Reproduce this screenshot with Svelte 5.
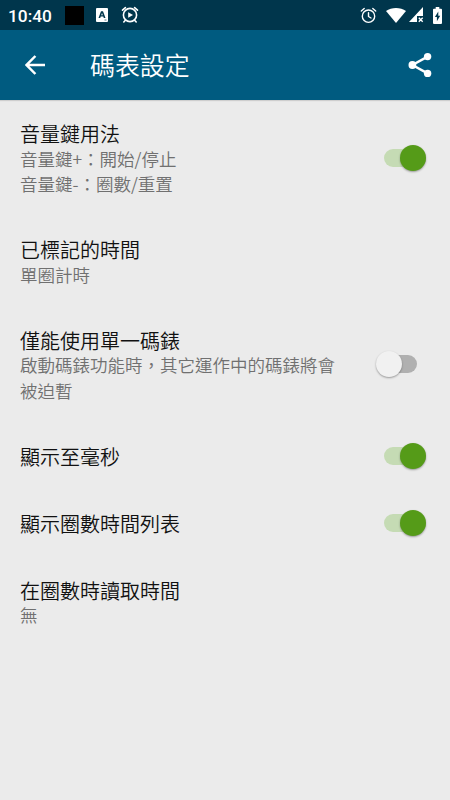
<script>
  let rows = $state([
    { title: '音量鍵用法', lines: ['音量鍵+：開始/停止', '音量鍵-：圈數/重置'], on: true },
    { title: '已標記的時間', lines: ['單圈計時'] },
    { title: '僅能使用單一碼錶', lines: ['啟動碼錶功能時，其它運作中的碼錶將會', '被迫暫'], on: false },
    { title: '顯示至毫秒', lines: [], on: true },
    { title: '顯示圈數時間列表', lines: [], on: true },
    { title: '在圈數時讀取時間', lines: ['無'] }
  ]);
</script>

<div class="screen">
  <div class="status">
    <span class="clock">10:40</span>
    <span class="square"></span>
    <svg class="letter" width="12" height="14" viewBox="0 0 12 14">
      <path fill="#fff" fill-rule="evenodd" d="M1 0h10a1 1 0 0 1 1 1v12a1 1 0 0 1-1 1H1a1 1 0 0 1-1-1V1a1 1 0 0 1 1-1zM5 3.2 2.5 10h1.7l.5-1.4h2.6l.5 1.4h1.7L7 3.2zM6 5l.8 2.3H5.2z" />
      <path d="M8.5 12h2" stroke="#5c7e8d" />
    </svg>
    <svg class="play-alarm" width="18" height="18" viewBox="0 0 18 18" fill="none" stroke="#fff" stroke-width="1.6" stroke-linecap="round">
      <circle cx="9" cy="9" r="6.6" />
      <path d="M1.5 4.2 4.4 1.6M16.5 4.2l-2.9-2.6M4.4 14.2 2.8 16M13.6 14.2l1.6 1.8" />
      <path d="M7.2 6.2v5.6L12 9z" fill="#fff" stroke="none" />
    </svg>
    <span class="grow"></span>
    <svg class="alarm" width="17" height="17" viewBox="0 0 17 17" fill="none" stroke="#fff" stroke-width="1.4" stroke-linecap="round" stroke-linejoin="round">
      <circle cx="8.5" cy="9.2" r="6.2" />
      <path d="M1.3 4 4.2 1.5M15.7 4l-2.9-2.5M8.5 5.7v3.8l2.5 1.5" />
    </svg>
    <svg class="wifi" width="20" height="15" viewBox="0 0 20 15">
      <path fill="#fff" d="M0 3.1C5.5-1 14.5-1 20 3.1L10 15z" />
    </svg>
    <svg class="signal" width="15" height="16" viewBox="0 0 15 16">
      <path fill="#fff" d="M14 0v9H8v6H0z" />
      <path d="m9.8 10.8 3.9 3.9m0-3.9-3.9 3.9" stroke="#fff" stroke-width="1.4" />
    </svg>
    <svg class="battery" width="9" height="17" viewBox="0 0 9 16" preserveAspectRatio="none">
      <path fill="#fff" fill-rule="evenodd" d="M2.7 0h3.6v1.6H8a1 1 0 0 1 1 1V15a1 1 0 0 1-1 1H1a1 1 0 0 1-1-1V2.6a1 1 0 0 1 1-1h1.7zM5.3 4.3 1.9 9.4h2v4L7.2 8.2H5.3z" />
    </svg>
  </div>

  <header>
    <svg class="back" width="20" height="20" viewBox="0 0 20 20" fill="none" stroke="#fff" stroke-width="2.5">
      <path d="M20 10H2M10.4 1 1.6 10l8.8 9" />
    </svg>
    <h1>碼表設定</h1>
    <svg class="share" width="24" height="26" viewBox="0 0 24 26" fill="#fff">
      <path d="M19.6 4.6 4.4 13l15.2 8.4" fill="none" stroke="#fff" stroke-width="2.4" />
      <circle cx="19.6" cy="4.6" r="3.7" />
      <circle cx="4.4" cy="13" r="3.9" />
      <circle cx="19.6" cy="21.4" r="3.7" />
    </svg>
  </header>

  <main>
    {#each rows as row}
      <section class:single={!row.lines.length}>
        <div class="text">
          <h2>{row.title}</h2>
          {#each row.lines as line}
            <p>{line}</p>
          {/each}
        </div>
        {#if row.on !== undefined}
          <button
            class="switch"
            class:on={row.on}
            role="switch"
            aria-checked={row.on}
            aria-label={row.title}
            onclick={() => (row.on = !row.on)}
          ><span class="thumb"></span></button>
        {/if}
      </section>
    {/each}
  </main>
</div>

<style>
  :global(body) {
    margin: 0;
    background: #ebebeb;
  }
  .screen {
    width: 450px;
    height: 800px;
    overflow: hidden;
    background: #ebebeb;
    font-family: Roboto, 'Noto Sans CJK TC', sans-serif;
    display: flex;
    flex-direction: column;
  }
  .status {
    height: 30px;
    flex: none;
    box-sizing: border-box;
    padding: 0 8px;
    background: #00364c;
    display: flex;
    align-items: center;
  }
  .clock {
    width: 57px;
    color: #fff;
    font-size: 17.3px;
    font-weight: 500;
    line-height: 30px;
    padding-top: 1px;
  }
  .square {
    width: 19px;
    height: 19px;
    background: #000;
  }
  .letter {
    margin-left: 12px;
  }
  .play-alarm {
    margin-left: 13px;
  }
  .grow {
    flex: 1;
  }
  .wifi {
    margin-left: 9px;
  }
  .signal {
    margin-left: 3px;
  }
  .battery {
    margin-left: 9px;
  }
  header {
    height: 70px;
    flex: none;
    box-sizing: border-box;
    padding: 0 18px 0 25px;
    background: #005b80;
    box-shadow: 0 1px 1px rgba(0, 0, 0, 0.12);
    display: flex;
    align-items: center;
  }
  h1 {
    margin: 0 0 0 45px;
    padding-bottom: 2px;
    flex: 1;
    color: #fff;
    font-family: 'Noto Sans CJK TC', sans-serif;
    font-size: 24.9px;
    font-weight: 350;
    line-height: 36px;
  }
  main {
    padding-top: 1px;
  }
  section {
    box-sizing: border-box;
    padding: 22px 24px 20.5px 20px;
    display: flex;
    align-items: center;
    justify-content: space-between;
  }
  .single {
    height: 67px;
    padding-top: 21px;
    padding-bottom: 21px;
  }
  h2 {
    margin: 0 0 -2.5px;
    color: #111;
    font-size: 20px;
    font-weight: 350;
    line-height: 25px;
  }
  p {
    margin: 0;
    color: #707070;
    font-family: 'Noto Sans CJK TC', sans-serif;
    font-size: 17.5px;
    font-weight: 350;
    line-height: 25.5px;
    white-space: nowrap;
  }
  .switch {
    flex: none;
    width: 32px;
    height: 18px;
    margin: 0 9px 4px 0;
    padding: 0;
    border: 0;
    background: #b0b0b0;
    border-radius: 9px;
    display: flex;
    align-items: center;
  }
  .switch.on {
    width: 42px;
    margin-right: 0;
    background: #c5dbb4;
    justify-content: flex-end;
  }
  .single .switch.on {
    margin-bottom: 3px;
  }
  .thumb {
    flex: none;
    width: 26px;
    height: 26px;
    margin-left: -9px;
    border-radius: 50%;
    background: #f1f1f1;
    box-shadow: 0 1px 2px rgba(0, 0, 0, 0.35);
  }
  .on .thumb {
    background: #559b18;
  }
</style>
